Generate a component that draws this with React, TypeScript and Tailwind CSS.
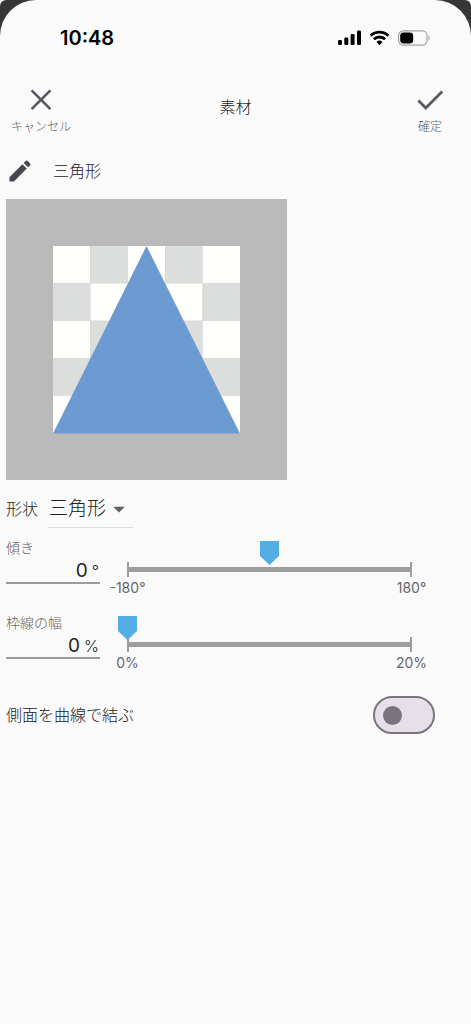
import React, { useState } from "react";
import { MdArrowDropDown, MdEdit } from "react-icons/md";

const shapes = ["三角形", "四角形", "円形", "星形"];

function StatusBar() {
  return (
    <div className="flex h-[76px] items-center justify-between pl-[60px] pr-10">
      <span className="text-xl font-semibold text-black">10:48</span>
      <div className="flex items-center gap-2">
        <svg width="24" height="16" viewBox="0 0 24 16" aria-hidden="true">
          <rect x="0" y="10" width="4" height="5" rx="1.2" />
          <rect x="6.3" y="7.5" width="4" height="7.5" rx="1.2" />
          <rect x="12.6" y="4" width="4" height="11" rx="1.2" />
          <rect x="19" y="0.5" width="4" height="14.5" rx="1.2" />
        </svg>
        <svg width="20" height="16" viewBox="0 0 20 16" aria-hidden="true">
          <g fill="none" stroke="#000" strokeWidth="2.9">
            <path d="M0.6 5.7a12.8 12.8 0 0 1 17.8 0" />
            <path d="M3.9 9.2a8.1 8.1 0 0 1 11.2 0" />
          </g>
          <path d="M9.5 15.2l3-3.2a4.4 4.4 0 0 0-6 0z" />
        </svg>
        <svg width="33" height="16" viewBox="0 0 33 16" aria-hidden="true">
          <rect x="0.6" y="0.8" width="28.4" height="14.4" rx="4.6" fill="none" stroke="#a3a3a3" strokeWidth="1.2" />
          <rect x="2.2" y="2.5" width="13" height="11" rx="3.4" />
          <path d="M30.5 5.6c1.7.7 1.7 4.1 0 4.8z" fill="#a3a3a3" />
        </svg>
      </div>
    </div>
  );
}

function Header() {
  return (
    <header className="grid grid-cols-3 items-center pb-2 pt-[9px]">
      <div className="flex justify-start pl-[11px]">
        <button className="flex flex-col items-center gap-1.5 text-xs font-light text-[#5f5f66]">
          <svg width="28" height="28" viewBox="0 0 28 28" fill="none" stroke="#5b5661" strokeWidth="2.6" aria-hidden="true">
            <path d="M4.6 5.4l18.8 18.8M23.4 5.4L4.6 24.2" />
          </svg>
          キャンセル
        </button>
      </div>
      <h1 className="pb-1.5 text-center text-base font-light text-[#222]">素材</h1>
      <div className="flex justify-end pr-[27px]">
        <button className="flex flex-col items-center gap-1.5 text-xs font-light text-[#5f5f66]">
          <svg width="28" height="28" viewBox="0 0 28 28" fill="none" stroke="#5b5661" strokeWidth="2.8" aria-hidden="true">
            <path d="M2.4 15.6l7.4 7.4L26.2 6.4" />
          </svg>
          確定
        </button>
      </div>
    </header>
  );
}

function Preview() {
  const cells = Array.from({ length: 25 }, (_, i) => i);
  return (
    <svg viewBox="0 0 281 281" className="block aspect-square w-[281px]" role="img" aria-label="三角形">
      <rect width="281" height="281" fill="#b9b9b9" />
      {cells.map((i) => (
        <rect
          key={i}
          x={47 + (i % 5) * 37.4}
          y={47 + Math.floor(i / 5) * 37.4}
          width="37.4"
          height="37.4"
          fill={i % 2 === 0 ? "#fffffc" : "#dcdedd"}
        />
      ))}
      <path d="M140.5 47L234 234.5H47z" fill="#6c9bd2" />
    </svg>
  );
}

type SliderFieldProps = {
  id: string;
  label: string;
  unit: string;
  min: number;
  max: number;
  initial: number;
};

function SliderField({ id, label, unit, min, max, initial }: SliderFieldProps) {
  const [value, setValue] = useState(initial);

  return (
    <div className="flex h-[75px] pr-[50px]">
      <div className="w-[94px]">
        <label htmlFor={id} className="block text-sm font-light leading-5 text-[#66666b]">
          {label}
        </label>
        <div className="flex h-[26px] items-center gap-1 border-b-2 border-[#9b9b9f] pr-px pt-0.5 text-[#222]">
          <input
            id={id}
            type="text"
            inputMode="numeric"
            value={value}
            onChange={(e) => setValue(Number(e.target.value) || 0)}
            className="min-w-0 flex-1 bg-transparent text-right text-[19px] outline-none"
          />
          <span className="text-base font-light">{unit}</span>
        </div>
      </div>

      <div className="ml-[18px] flex-1">
        <div className="relative h-10">
          <div className="mx-[9px] flex h-full items-end pb-px">
            <div className="flex h-[15px] w-full items-center border-x-2 border-[#9e9e9e]">
              <div className="h-[5px] w-full bg-[#9e9e9e]" />
            </div>
          </div>
          <input
            type="range"
            aria-label={label}
            min={min}
            max={max}
            value={value}
            onChange={(e) => setValue(Number(e.target.value))}
            className="absolute inset-x-0 top-[3px] h-6 w-full cursor-pointer appearance-none bg-transparent [&::-webkit-slider-thumb]:h-6 [&::-webkit-slider-thumb]:w-[19px] [&::-webkit-slider-thumb]:appearance-none [&::-webkit-slider-thumb]:bg-[#52aee4] [&::-webkit-slider-thumb]:[clip-path:polygon(0_0,100%_0,100%_62%,50%_100%,0_62%)]"
          />
        </div>
        <div className="flex justify-between text-sm leading-5 text-[#66666b]">
          <span className="flex w-[19px] justify-center whitespace-nowrap">
            {min}
            {unit}
          </span>
          <span className="flex w-[19px] justify-center whitespace-nowrap">
            {max}
            {unit}
          </span>
        </div>
      </div>
    </div>
  );
}

export default function App() {
  const [shape, setShape] = useState(shapes[0]);
  const [curved, setCurved] = useState(false);

  return (
    <div className="min-h-screen bg-white font-['Inter','Noto_Sans_CJK_JP',sans-serif]">
      <div className="rounded-t-md bg-[#363636]">
        <div className="min-h-screen rounded-t-[36px] bg-[#fafafa]">
          <StatusBar />
          <Header />

          <main className="pl-1.5">
            <div className="flex h-14 items-center gap-[19px]">
              <button aria-label="名前を編集">
                <MdEdit className="h-7 w-7 text-[#49454f]" />
              </button>
              <span className="text-base font-light text-[#222]">三角形</span>
            </div>

            <Preview />

            <div className="flex items-center gap-2.5 py-2.5">
              <label htmlFor="shape" className="text-base font-light text-[#222]">
                形状
              </label>
              <div className="relative border-b border-[#dcdcdc]">
                <select
                  id="shape"
                  value={shape}
                  onChange={(e) => setShape(e.target.value)}
                  className="h-[37px] w-[85px] appearance-none bg-transparent pl-px pt-0.5 text-[19px] font-light text-[#222] outline-none"
                >
                  {shapes.map((name) => (
                    <option key={name}>{name}</option>
                  ))}
                </select>
                <MdArrowDropDown className="pointer-events-none absolute right-0 top-[5px] h-7 w-7 text-[#616161]" />
              </div>
            </div>

            <SliderField id="tilt" label="傾き" unit="°" min={-180} max={180} initial={0} />
            <SliderField id="border-width" label="枠線の幅" unit="%" min={0} max={20} initial={0} />

            <div className="flex items-center justify-between pr-9 pt-2">
              <label htmlFor="curved" className="text-base font-light text-[#222]">
                側面を曲線で結ぶ
              </label>
              <button
                id="curved"
                role="switch"
                aria-checked={curved}
                onClick={() => setCurved(!curved)}
                className={`flex h-[38px] w-[62px] items-center rounded-full border-2 border-[#79747e] bg-[#e6e0e9] px-2 ${
                  curved ? "justify-end" : "justify-start"
                }`}
              >
                <span className="h-[19px] w-[19px] rounded-full bg-[#79747e]" />
              </button>
            </div>
          </main>
        </div>
      </div>
    </div>
  );
}
